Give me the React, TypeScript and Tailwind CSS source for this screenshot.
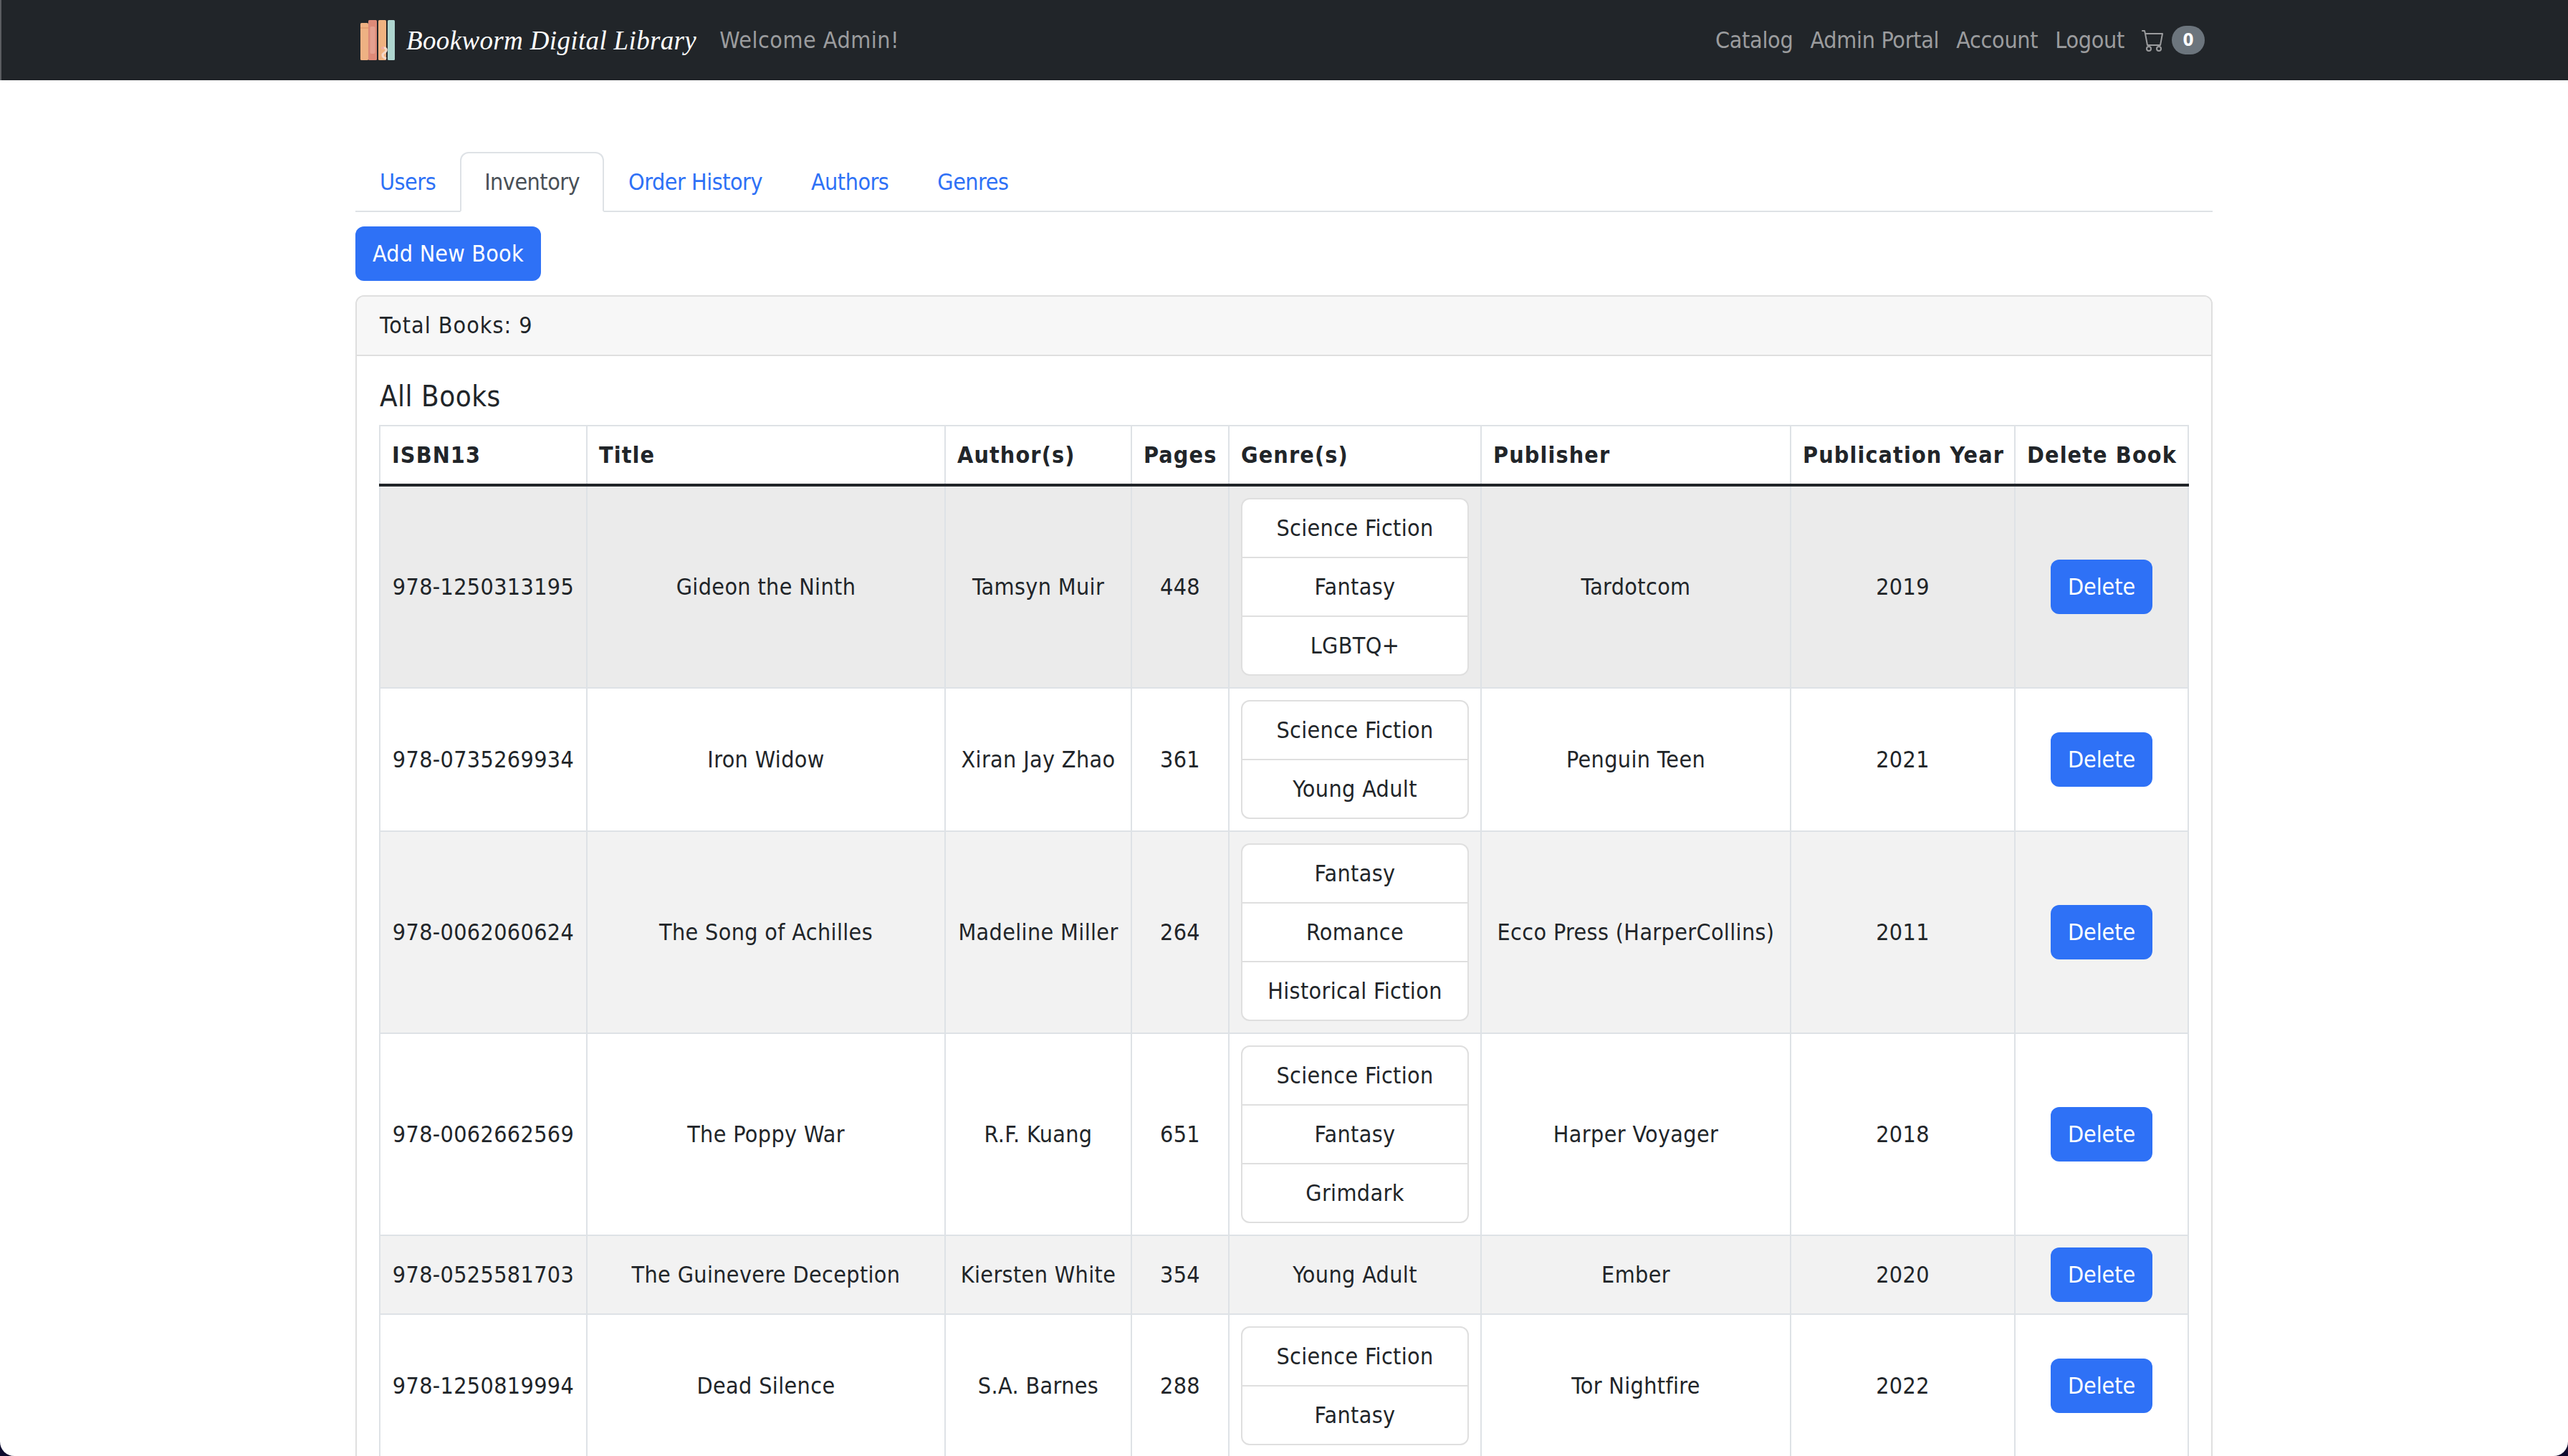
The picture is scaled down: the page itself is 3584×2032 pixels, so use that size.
import { BsCart } from "react-icons/bs";

const books = [
  { isbn: "978-1250313195", title: "Gideon the Ninth", author: "Tamsyn Muir", pages: 448, genres: ["Science Fiction", "Fantasy", "LGBTQ+"], publisher: "Tardotcom", year: 2019 },
  { isbn: "978-0735269934", title: "Iron Widow", author: "Xiran Jay Zhao", pages: 361, genres: ["Science Fiction", "Young Adult"], publisher: "Penguin Teen", year: 2021 },
  { isbn: "978-0062060624", title: "The Song of Achilles", author: "Madeline Miller", pages: 264, genres: ["Fantasy", "Romance", "Historical Fiction"], publisher: "Ecco Press (HarperCollins)", year: 2011 },
  { isbn: "978-0062662569", title: "The Poppy War", author: "R.F. Kuang", pages: 651, genres: ["Science Fiction", "Fantasy", "Grimdark"], publisher: "Harper Voyager", year: 2018 },
  { isbn: "978-0525581703", title: "The Guinevere Deception", author: "Kiersten White", pages: 354, genres: ["Young Adult"], publisher: "Ember", year: 2020 },
  { isbn: "978-1250819994", title: "Dead Silence", author: "S.A. Barnes", pages: 288, genres: ["Science Fiction", "Fantasy"], publisher: "Tor Nightfire", year: 2022 },
];

const rowColors = ["bg-[#ebebeb]", "bg-white", "bg-[#f2f2f2]", "bg-white", "bg-[#f2f2f2]", "bg-white"];

const headCell = "whitespace-nowrap border-2 border-b-4 border-[#dee2e6] border-b-[#212529] p-4 text-left font-bold tracking-[1.1px]";
const cell = "border-2 border-[#dee2e6] p-4 text-center";

export default function App() {
  return (
    <div className="h-[2032px] w-[3584px] overflow-hidden bg-[#0d0b2e]">
      <div className="h-[2032px] overflow-hidden rounded-b-[20px] bg-white font-['DejaVu_Sans_Condensed','DejaVu_Sans',sans-serif] text-[32px] leading-[48px] tracking-[0.35px] text-[#212529]">
        <Navbar />
        <main className="mx-auto mt-[100px] w-[2640px] px-6">
          <Tabs />
          <button className="mt-5 h-[76px] rounded-xl bg-[#2e71f6] px-6 tracking-[0.2px] text-white">Add New Book</button>
          <section className="mt-5 rounded-xl border-2 border-[#dfdfdf]">
            <div className="h-[83px] rounded-t-[10px] border-b-2 border-[#dfdfdf] bg-[#f7f7f7] px-8 py-4 tracking-[1px]">Total Books: 9</div>
            <div className="p-8">
              <h5 className="mb-4 text-[40px] leading-[48px] tracking-[0.5px]">All Books</h5>
              <BookTable />
            </div>
          </section>
        </main>
      </div>
    </div>
  );
}

function Navbar() {
  return (
    <nav className="h-[112px] border-l-2 border-[#5a5d61] bg-[#212529]">
      <div className="mx-auto flex h-full w-[2640px] items-center px-6 text-[#9b9c9e]">
        <BookLogo />
        <span className="ml-4 font-['Liberation_Serif',serif] text-[37px] italic leading-none text-white">Bookworm Digital Library</span>
        <span className="ml-8 tracking-[0.5px]">Welcome Admin!</span>
        <div className="ml-auto mr-3 flex items-center gap-6 tracking-[-0.3px]">
          <a>Catalog</a>
          <a>Admin Portal</a>
          <a>Account</a>
          <a>Logout</a>
          <div className="flex items-center gap-2.5">
            <BsCart size={32} />
            <span className="flex h-10 w-[46px] items-center justify-center rounded-full bg-[#6c757d] text-[24px] font-bold tracking-normal text-white">0</span>
          </div>
        </div>
      </div>
    </nav>
  );
}

function BookLogo() {
  return (
    <svg className="ml-1.5" width="48" height="56" viewBox="0 0 48 56">
      <rect x="0" y="4" width="11" height="52" rx="1.5" fill="#eeb183" />
      <rect x="0" y="10" width="11" height="2" fill="#e59f73" />
      <rect x="11" y="0" width="12" height="56" rx="1.5" fill="#dd8a78" />
      <rect x="13.5" y="9" width="7" height="38" rx="2" fill="#e5a090" />
      <rect x="25" y="0" width="11" height="56" rx="1.5" fill="#efb280" />
      <rect x="38" y="0" width="10" height="56" rx="1.5" fill="#aed5cf" />
      <path d="M30 40c4-3 7 0 6 3s-5 3-5 6 3 4 5 5" fill="none" stroke="#f6d9c8" strokeWidth="3" />
      <circle cx="31" cy="39" r="2" fill="#f0a9a0" />
    </svg>
  );
}

function Tabs() {
  const tabs = ["Users", "Inventory", "Order History", "Authors", "Genres"];
  return (
    <ul className="flex h-[84px] border-b-2 border-[#dee2e6] tracking-[-0.5px]">
      {tabs.map((tab) =>
        tab === "Inventory" ? (
          <li key={tab} className="h-[84px] rounded-t-xl border-2 border-[#dee2e6] border-b-white bg-white px-8 py-4 text-[#495057]">
            {tab}
          </li>
        ) : (
          <li key={tab} className="h-[84px] border-2 border-transparent px-8 py-4 text-[#2e71f6]">
            {tab}
          </li>
        ),
      )}
    </ul>
  );
}

function BookTable() {
  return (
    <table className="ml-[-1px] w-[2524px] table-fixed border-collapse">
      <colgroup>
        <col className="w-[289px]" />
        <col className="w-[500px]" />
        <col className="w-[260px]" />
        <col className="w-[136px]" />
        <col className="w-[352px]" />
        <col className="w-[432px]" />
        <col className="w-[313px]" />
        <col className="w-[242px]" />
      </colgroup>
      <thead>
        <tr>
          <th className={headCell}>ISBN13</th>
          <th className={headCell}>Title</th>
          <th className={headCell}>Author(s)</th>
          <th className={headCell}>Pages</th>
          <th className={headCell}>Genre(s)</th>
          <th className={headCell}>Publisher</th>
          <th className={headCell}>Publication Year</th>
          <th className={headCell}>Delete Book</th>
        </tr>
      </thead>
      <tbody>
        {books.map((book, i) => (
          <tr key={book.isbn} className={rowColors[i]}>
            <td className={cell}>{book.isbn}</td>
            <td className={cell}>{book.title}</td>
            <td className={cell}>{book.author}</td>
            <td className={cell}>{book.pages}</td>
            <td className={cell}>
              {book.genres.length > 1 ? <GenreList genres={book.genres} /> : book.genres[0]}
            </td>
            <td className={cell}>{book.publisher}</td>
            <td className={cell}>{book.year}</td>
            <td className={cell}>
              <button className="h-[76px] rounded-xl bg-[#2e71f6] px-6 tracking-[-0.1px] text-white">Delete</button>
            </td>
          </tr>
        ))}
      </tbody>
    </table>
  );
}

function GenreList({ genres }: { genres: string[] }) {
  return (
    <ul className="divide-y-2 divide-[#dfdfdf] rounded-xl border-2 border-[#dfdfdf] bg-white">
      {genres.map((genre) => (
        <li key={genre} className="px-4 py-4">
          {genre}
        </li>
      ))}
    </ul>
  );
}
